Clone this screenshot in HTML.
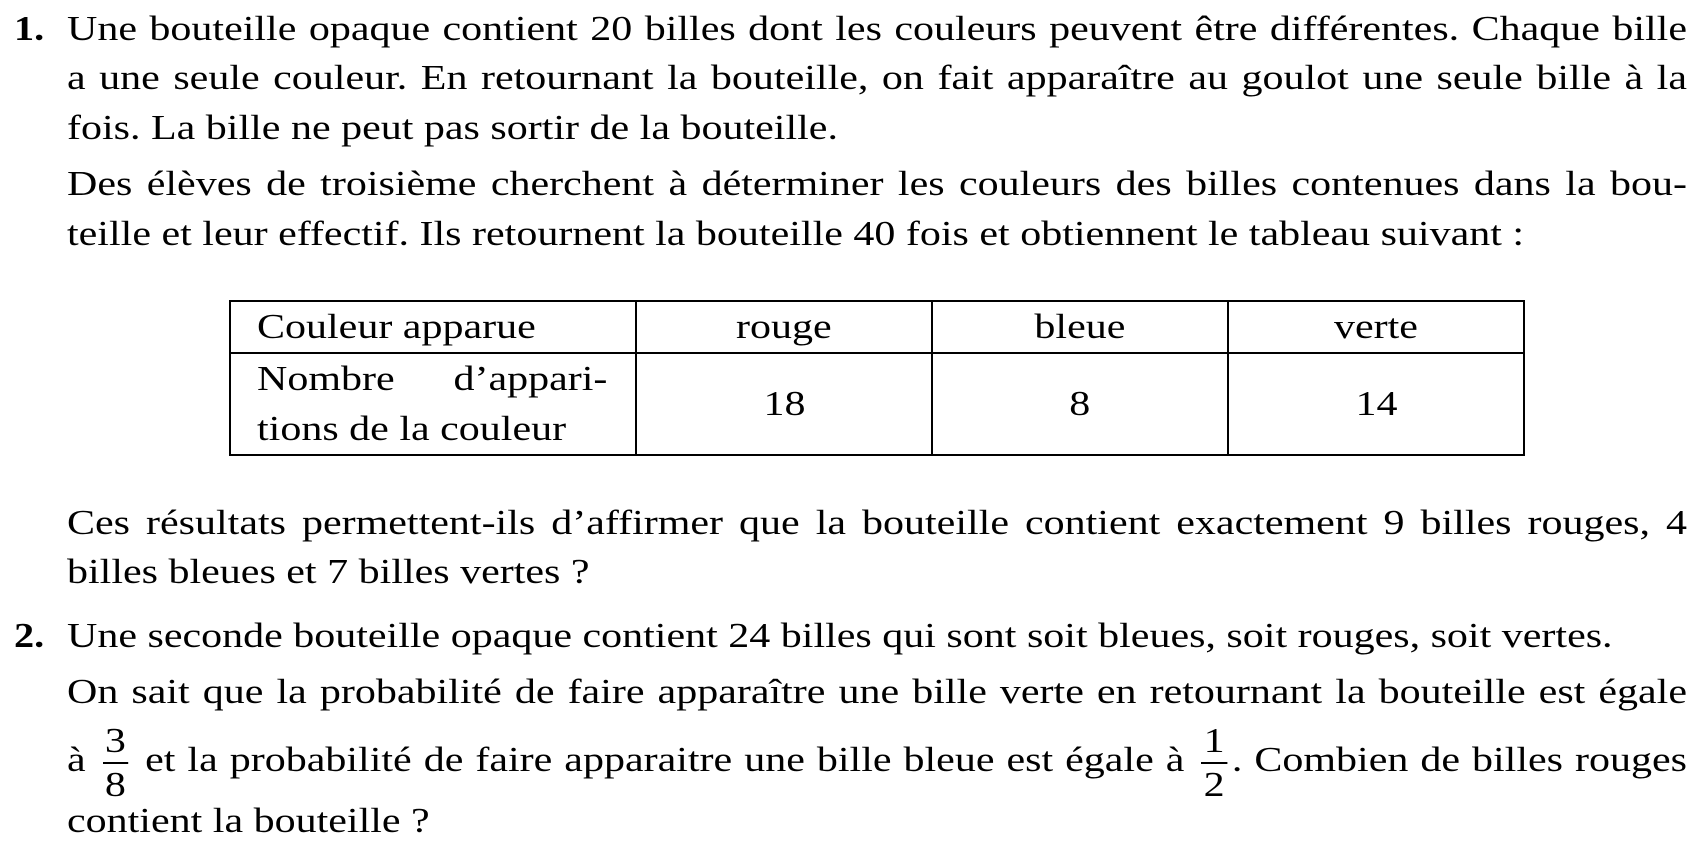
<!DOCTYPE html>
<html><head><meta charset="utf-8"><style>
body{margin:0;width:1701px;height:851px;background:#fff;position:relative;overflow:hidden;font-family:"Liberation Serif",serif;font-size:35px;color:#000}
.l{position:absolute;left:67px;width:1350px;height:40px;line-height:40px;white-space:nowrap;transform:scaleX(1.2);transform-origin:0 0}
.j{text-align:justify;text-align-last:justify}
.n{position:absolute;left:14px;font-weight:bold;line-height:40px;transform:scaleX(1.15);transform-origin:0 0}
table{position:absolute;left:229px;top:300px;border-collapse:collapse;width:1296px}
td{border:2.5px solid #000;text-align:center;padding:0;line-height:44px}
.s{display:inline-block;transform:scaleX(1.2)}
.sl{display:block;transform:scaleX(1.2);transform-origin:0 0;width:292px}
.fr{display:inline-block;vertical-align:middle;text-align:center;line-height:42px;margin:0 4px}
.fr span{display:block;padding:0 2px}
.fr .t{border-bottom:2.5px solid #000}
</style></head><body>
<div class="n" style="top:9px">1.</div>
<div class="l j" style="top:9px">Une bouteille opaque contient 20 billes dont les couleurs peuvent être différentes. Chaque bille</div>
<div class="l j" style="top:58px">a une seule couleur. En retournant la bouteille, on fait apparaître au goulot une seule bille à la</div>
<div class="l" style="top:108px">fois. La bille ne peut pas sortir de la bouteille.</div>
<div class="l j" style="top:164px">Des élèves de troisième cherchent à déterminer les couleurs des billes contenues dans la bou-</div>
<div class="l" style="top:214px">teille et leur effectif. Ils retournent la bouteille 40 fois et obtiennent le tableau suivant :</div>
<table>
<tr style="height:52px"><td style="width:378px;text-align:left;padding-left:26px"><span class="sl">Couleur apparue</span></td><td style="width:294px"><span class="s">rouge</span></td><td style="width:294px"><span class="s">bleue</span></td><td><span class="s">verte</span></td></tr>
<tr style="height:100px"><td style="text-align:left;padding-left:26px;line-height:50px"><div class="sl"><div style="display:flex;justify-content:space-between"><span>Nombre</span><span>d’appari-</span></div>tions de la couleur</div></td><td><span class="s">18</span></td><td><span class="s">8</span></td><td><span class="s">14</span></td></tr>
</table>
<div class="l j" style="top:503px">Ces résultats permettent-ils d’affirmer que la bouteille contient exactement 9 billes rouges, 4</div>
<div class="l" style="top:552px">billes bleues et 7 billes vertes ?</div>
<div class="n" style="top:616px">2.</div>
<div class="l" style="top:616px">Une seconde bouteille opaque contient 24 billes qui sont soit bleues, soit rouges, soit vertes.</div>
<div class="l j" style="top:672px">On sait que la probabilité de faire apparaître une bille verte en retournant la bouteille est égale</div>
<div class="l j" style="top:720px">à <span class="fr"><span class="t">3</span><span>8</span></span> et la probabilité de faire apparaitre une bille bleue est égale à <span class="fr"><span class="t">1</span><span>2</span></span>. Combien de billes rouges</div>
<div class="l" style="top:801px">contient la bouteille ?</div>
</body></html>
